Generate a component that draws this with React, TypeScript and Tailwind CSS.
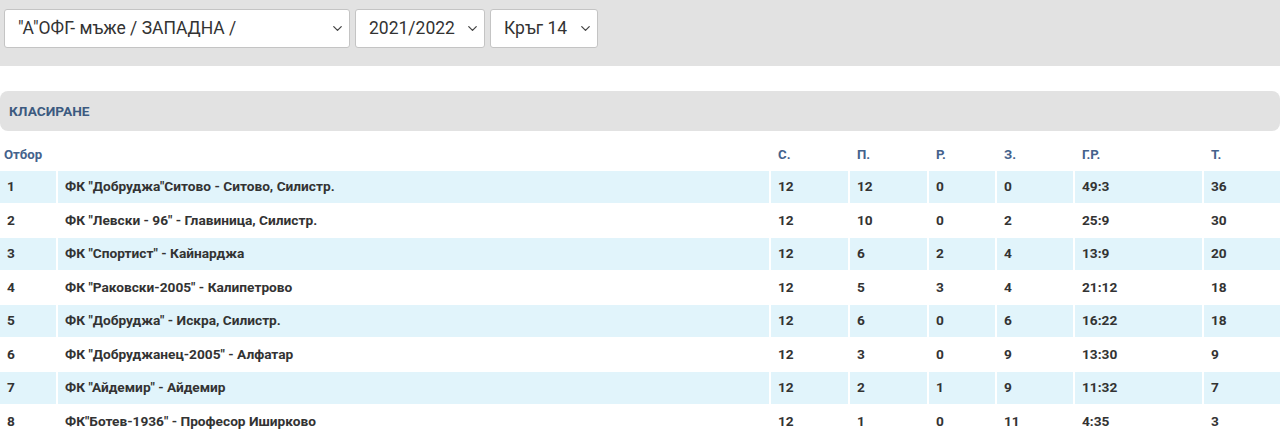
import { ChevronDown } from "lucide-react";

type Row = {
  pos: number;
  team: string;
  played: number;
  won: number;
  drawn: number;
  lost: number;
  goals: string;
  points: number;
};

const rows: Row[] = [
  { pos: 1, team: 'ФК "Добруджа"Ситово - Ситово, Силистр.', played: 12, won: 12, drawn: 0, lost: 0, goals: "49:3", points: 36 },
  { pos: 2, team: 'ФК "Левски - 96" - Главиница, Силистр.', played: 12, won: 10, drawn: 0, lost: 2, goals: "25:9", points: 30 },
  { pos: 3, team: 'ФК "Спортист" - Кайнарджа', played: 12, won: 6, drawn: 2, lost: 4, goals: "13:9", points: 20 },
  { pos: 4, team: 'ФК "Раковски-2005" - Калипетрово', played: 12, won: 5, drawn: 3, lost: 4, goals: "21:12", points: 18 },
  { pos: 5, team: 'ФК "Добруджа" - Искра, Силистр.', played: 12, won: 6, drawn: 0, lost: 6, goals: "16:22", points: 18 },
  { pos: 6, team: 'ФК "Добруджанец-2005" - Алфатар', played: 12, won: 3, drawn: 0, lost: 9, goals: "13:30", points: 9 },
  { pos: 7, team: 'ФК "Айдемир" - Айдемир', played: 12, won: 2, drawn: 1, lost: 9, goals: "11:32", points: 7 },
  { pos: 8, team: 'ФК"Ботев-1936" - Професор Иширково', played: 12, won: 1, drawn: 0, lost: 11, goals: "4:35", points: 3 },
];

function Select({ label, className }: { label: string; className: string }) {
  return (
    <div
      className={`flex h-[39px] items-center justify-between rounded-[3px] border border-[#c4c4c4] bg-white pl-[13px] pr-[4px] text-[17.5px] text-[#333] ${className}`}
    >
      <span>{label}</span>
      <ChevronDown className="h-[15px] w-[15px] text-[#444]" strokeWidth={2} />
    </div>
  );
}

export default function App() {
  const cell = "pl-[7px] pr-[4px] align-middle";
  const head = "pl-[7px] pr-[4px] pt-[2px] align-top font-bold";
  return (
    <div className="min-h-[445px] bg-white font-['Roboto',sans-serif]">
      <div className="flex h-[66px] items-start gap-[5px] bg-[#e2e2e2] px-[4px] pt-[9px]">
        <Select label={'"А"ОФГ- мъже / ЗАПАДНА /'} className="w-[346px]" />
        <Select label="2021/2022" className="w-[130px]" />
        <Select label="Кръг 14" className="w-[108px]" />
      </div>

      <div className="mt-[25px] flex h-[40px] items-center rounded-[8px] bg-[#e2e2e2] pl-[9px]">
        <span className="text-[13.7px] font-bold text-[#3c5a80]">КЛАСИРАНЕ</span>
      </div>

      <table className="-mx-[2px] mt-[10px] w-[1284px] table-fixed border-separate border-spacing-[2px] text-[13.7px] font-bold text-[#333]">
        <colgroup>
          <col className="w-[56px]" />
          <col className="w-[711px]" />
          <col className="w-[77px]" />
          <col className="w-[77px]" />
          <col className="w-[66px]" />
          <col className="w-[76px]" />
          <col className="w-[127px]" />
          <col className="w-[76px]" />
        </colgroup>
        <thead>
          <tr className="h-[26px] text-left text-[13.2px] text-[#44628c]">
            <th className="pl-[4px] pt-[2px] align-top font-bold">Отбор</th>
            <th />
            <th className={head}>С.</th>
            <th className={head}>П.</th>
            <th className={head}>Р.</th>
            <th className={head}>З.</th>
            <th className={head}>Г.Р.</th>
            <th className={head}>Т.</th>
          </tr>
        </thead>
        <tbody>
          {rows.map((r) => (
            <tr key={r.pos} className={`h-[31.5px] ${r.pos % 2 === 1 ? "bg-[#e1f4fb]" : "bg-white"}`}>
              <td className={cell}>{r.pos}</td>
              <td className={cell}>{r.team}</td>
              <td className={cell}>{r.played}</td>
              <td className={cell}>{r.won}</td>
              <td className={cell}>{r.drawn}</td>
              <td className={cell}>{r.lost}</td>
              <td className={cell}>{r.goals}</td>
              <td className={cell}>{r.points}</td>
            </tr>
          ))}
        </tbody>
      </table>
    </div>
  );
}
